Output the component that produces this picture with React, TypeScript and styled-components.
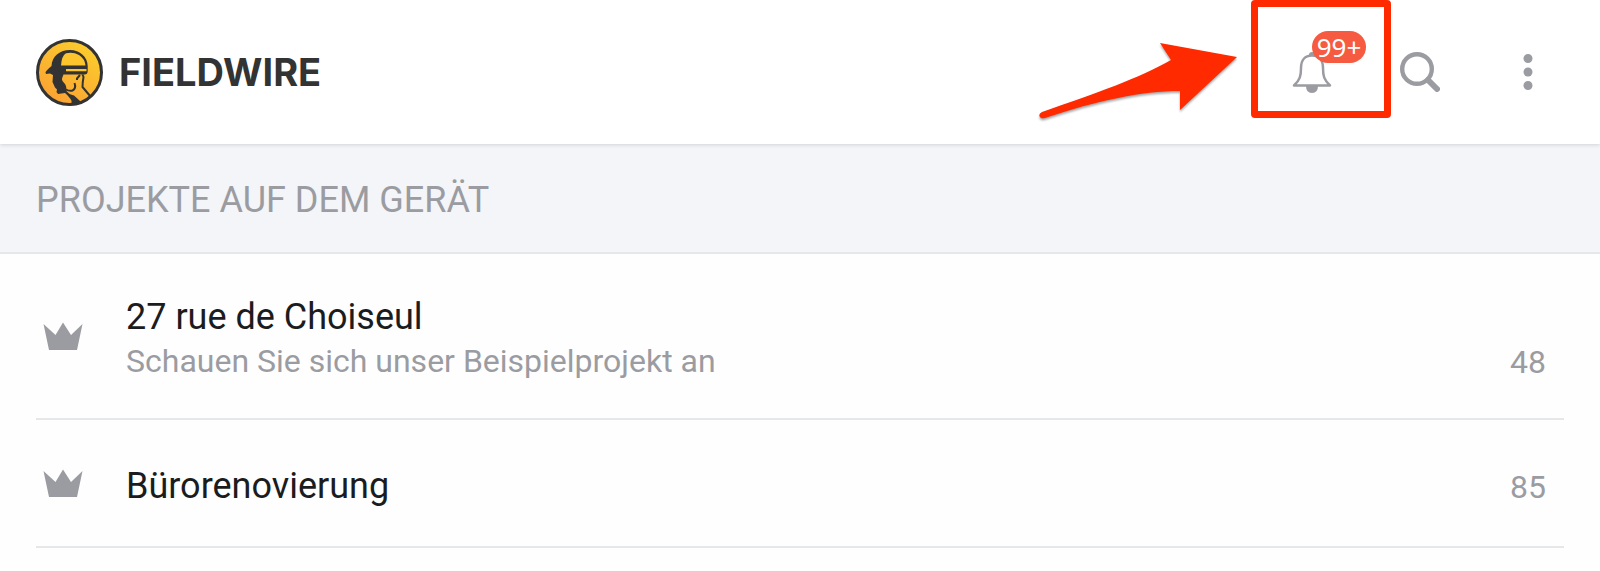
import React from "react";
import styled, { createGlobalStyle } from "styled-components";

const GlobalStyle = createGlobalStyle`
  * { box-sizing: border-box; }
  body {
    margin: 0;
    background: #fefefe;
    color: #1b1c20;
    font-family: Roboto, "Liberation Sans", sans-serif;
  }
`;

const Header = styled.header`
  position: relative;
  display: flex;
  align-items: center;
  justify-content: space-between;
  min-height: 144px;
  padding: 0 36px;
  background: #ffffff;
  box-shadow: 0 1px 4px rgba(0, 0, 0, 0.14);
`;

const Brand = styled.a`
  display: flex;
  align-items: center;
  gap: 16px;
  color: #333333;
  font-family: Inter, "Liberation Sans", sans-serif;
  font-size: 38px;
  font-weight: 700;
  line-height: 44px;
  text-decoration: none;
`;

const Actions = styled.div`
  display: flex;
  align-items: center;
`;

const IconButton = styled.button`
  position: relative;
  display: flex;
  align-items: center;
  justify-content: center;
  width: 108px;
  height: 72px;
  padding: 0;
  border: 0;
  background: transparent;
  color: #9b9ca1;
  font-family: inherit;
`;

const MoreButton = styled(IconButton)`
  width: 72px;
  margin-left: 18px;
`;

const Badge = styled.span`
  position: absolute;
  top: -5px;
  left: 54px;
  width: 54px;
  height: 32px;
  border-radius: 16px;
  background: #f65a41;
  color: #ffffff;
  font-family: "Noto Sans", sans-serif;
  font-size: 26px;
  line-height: 32px;
  text-align: center;
`;

const Highlight = styled.span`
  position: absolute;
  top: -36px;
  left: -7px;
  width: 140px;
  height: 118px;
  border: 7px solid #ff2a00;
  border-radius: 4px;
`;

const Arrow = styled.svg`
  position: absolute;
  top: 3px;
  right: 126px;
  filter: drop-shadow(0 2px 1px rgba(0, 0, 0, 0.35));
`;

const SectionTitle = styled.h2`
  margin: 0;
  padding: 34px 36px 30px;
  border-bottom: 2px solid #e6e7e9;
  background: #f4f5f8;
  color: #9b9ca1;
  font-size: 36px;
  font-weight: 400;
  line-height: 44px;
`;

const ProjectList = styled.ul`
  margin: 0;
  padding: 0 36px;
  list-style: none;
`;

const ProjectRow = styled.li`
  display: flex;
  align-items: center;
  gap: 43px;
  min-height: 128px;
  padding: 35px 18px 35px 7px;
  border-bottom: 2px solid #e6e7e9;
`;

const ProjectBody = styled.div`
  display: flex;
  flex: 1;
  align-items: flex-end;
  justify-content: space-between;
  padding-top: 6px;
`;

const ProjectName = styled.div`
  font-size: 36px;
  line-height: 44px;
`;

const ProjectNote = styled.div`
  color: #9b9ca1;
  font-size: 32px;
  line-height: 44px;
`;

const ProjectCount = styled.span`
  color: #9b9ca1;
  font-size: 32px;
  line-height: 42px;
`;

const LogoMark = () => (
  <svg width="67" height="67" viewBox="0 0 67 67" aria-hidden="true">
    <defs>
      <linearGradient id="gold" x1="0.8" y1="0" x2="0.2" y2="1">
        <stop offset="0" stopColor="#fbcf2c" />
        <stop offset="1" stopColor="#fba034" />
      </linearGradient>
      <clipPath id="disc">
        <circle cx="33.5" cy="33.5" r="33" />
      </clipPath>
    </defs>
    <circle cx="33.5" cy="33.5" r="32" fill="url(#gold)" stroke="#333333" strokeWidth="3" />
    <g clipPath="url(#disc)">
      <path
        fill="#333333"
        d="M9.500 33.500 Q10 31.500 15.500 27 C16 17 24 11 34 11 C44 11 51.700 18 51.700 27 V32 Q51.700 35.500 48.500 35.500 H27.500 L26 39.500 Q25.500 41.500 29 45 Q30.500 47 30.500 52 Q33 55.500 38 56.500 L44 62 L49 67 H34 Q37 63 34.500 60 Q31 55.500 29 54 L22 55 L20.500 53 L21 50.500 L19 48.500 L16.500 43 L17 36 L14 34.500 L10 35 Z"
      />
      <path fill="#fcc42d" d="M25 26.500 Q25.500 17 30 14.200 Q37 12.500 43 16 Q49 20 49.500 26.500 Z M30 30 H50.500 V32.200 H30 Z" />
      <path
        fill="none"
        stroke="#333333"
        strokeWidth="2"
        strokeLinejoin="round"
        d="M44 36 L41 39.500 V41 M38.500 44 Q40.500 49.500 36.500 51.500 Q33.500 52.500 30 50.500 M46.500 35.500 L47.500 38 Q46.500 44 46.500 48 L54.500 57.500"
      />
    </g>
  </svg>
);

const BellIcon = () => (
  <svg width="40" height="42" viewBox="0 0 40 42" fill="none" aria-hidden="true">
    <path
      d="M2 34.500 C8 29 9 25 9 17 C9 9 13 4.500 20 4.500 C27 4.500 31 9 31 17 C31 25 32 29 38 34.500 Z"
      stroke="currentColor"
      strokeWidth="2.500"
      strokeLinejoin="round"
    />
    <path d="M17 4 Q17 1 20 1 Q23 1 23 4 Z M14 35 H26 Q26 42 20 42 Q14 42 14 35 Z" fill="currentColor" />
  </svg>
);

const SearchIcon = () => (
  <svg width="40" height="40" viewBox="0 0 40 40" fill="none" stroke="currentColor" aria-hidden="true">
    <circle cx="17" cy="17" r="14.800" strokeWidth="4.400" />
    <path d="M28 28 L37 37" strokeWidth="6" strokeLinecap="round" />
  </svg>
);

const MoreIcon = () => (
  <svg width="10" height="36" viewBox="0 0 10 36" fill="currentColor" aria-hidden="true">
    <circle cx="5" cy="4.500" r="4.500" />
    <circle cx="5" cy="18" r="4.500" />
    <circle cx="5" cy="31.500" r="4.500" />
  </svg>
);

const CrownIcon = () => (
  <svg width="40" height="28" viewBox="0 0 40 28" fill="#9b9ca1" aria-hidden="true">
    <path d="M0.500 2 L12.500 13 L20 0.500 L28 13 L39.500 2 L34 28 H6 Z" />
  </svg>
);

const projects = [
  { name: "27 rue de Choiseul", note: "Schauen Sie sich unser Beispielprojekt an", count: 48 },
  { name: "Bürorenovierung", note: "", count: 85 },
];

export default function App() {
  return (
    <>
      <GlobalStyle />
      <Header>
        <Brand href="#">
          <LogoMark />
          FIELDWIRE
        </Brand>
        <Actions>
          <IconButton type="button" aria-label="Benachrichtigungen">
            <BellIcon />
            <Badge>99+</Badge>
            <Highlight />
            <Arrow width="204" height="90" viewBox="0 0 204 90" aria-hidden="true">
              <path
                fill="#ff2a00"
                d="M201 18 L124 4 L135 21 C104 39 60 54 6 73 Q2 75 4 78 Q5 80 9 79 C60 62 105 52 144 52 L144 71 Z"
              />
            </Arrow>
          </IconButton>
          <IconButton type="button" aria-label="Suchen">
            <SearchIcon />
          </IconButton>
          <MoreButton type="button" aria-label="Mehr">
            <MoreIcon />
          </MoreButton>
        </Actions>
      </Header>
      <main>
        <SectionTitle>PROJEKTE AUF DEM GERÄT</SectionTitle>
        <ProjectList>
          {projects.map((project) => (
            <ProjectRow key={project.name}>
              <CrownIcon />
              <ProjectBody>
                <div>
                  <ProjectName>{project.name}</ProjectName>
                  {project.note && <ProjectNote>{project.note}</ProjectNote>}
                </div>
                <ProjectCount>{project.count}</ProjectCount>
              </ProjectBody>
            </ProjectRow>
          ))}
        </ProjectList>
      </main>
    </>
  );
}
